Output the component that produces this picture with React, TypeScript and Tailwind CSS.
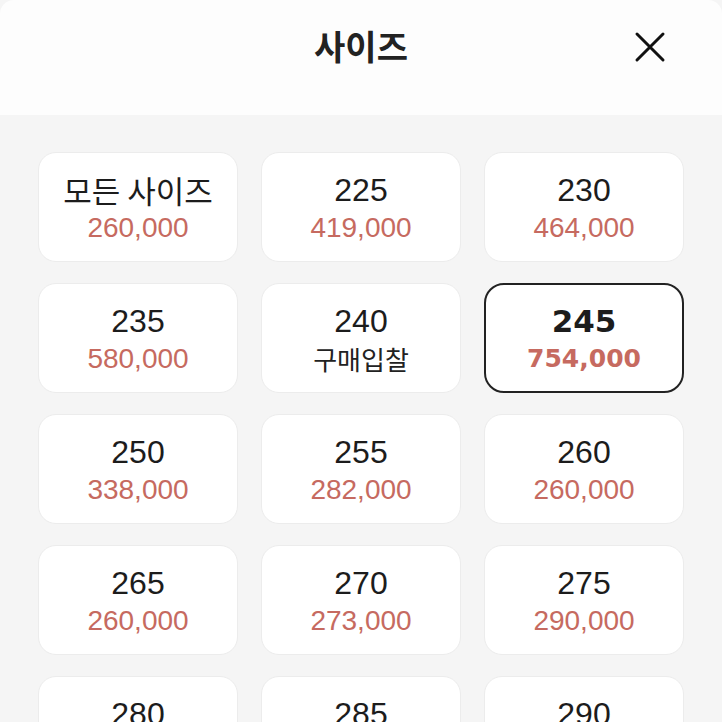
import React from 'react';

type SizeItem = {
  size: string;
  price: string;
  bid?: boolean;
  selected?: boolean;
};

const sizes: SizeItem[] = [
  { size: '모든 사이즈', price: '260,000' },
  { size: '225', price: '419,000' },
  { size: '230', price: '464,000' },
  { size: '235', price: '580,000' },
  { size: '240', price: '구매입찰', bid: true },
  { size: '245', price: '754,000', selected: true },
  { size: '250', price: '338,000' },
  { size: '255', price: '282,000' },
  { size: '260', price: '260,000' },
  { size: '265', price: '260,000' },
  { size: '270', price: '273,000' },
  { size: '275', price: '290,000' },
  { size: '280', price: '310,000' },
  { size: '285', price: '320,000' },
  { size: '290', price: '340,000' },
];

const kr = { fontFamily: '"Noto Sans CJK KR", sans-serif' };
const heavy = { fontFamily: '"DejaVu Sans", sans-serif' };

export default function App() {
  return (
    <div
      className="w-[722px] h-[722px] overflow-hidden bg-[#f5f5f5]"
      style={{ fontFamily: '"Liberation Sans", "Noto Sans CJK KR", sans-serif' }}
    >
      <div className="h-[115px] bg-[#fdfdfd] rounded-t-[14px] relative flex items-start justify-center">
        <h1 className="mt-[24px] text-[34px] leading-[44px] font-bold text-[#222]" style={kr}>
          사이즈
        </h1>
        <button className="absolute right-[56px] top-[31px] w-[32px] h-[32px] flex items-center justify-center">
          <svg width="32" height="32" viewBox="0 0 32 32" fill="none">
            <path d="M3 3L29 29M29 3L3 29" stroke="#111" strokeWidth="3" strokeLinecap="round" />
          </svg>
        </button>
      </div>

      <div className="px-[38px] pt-[37px] grid grid-cols-3 gap-x-[23px] gap-y-[21px]">
        {sizes.map((item) => (
          <div
            key={item.size}
            className={
              item.selected
                ? 'h-[110px] pt-[4px] rounded-[20px] bg-white border-2 border-[#222] flex flex-col items-center justify-center'
                : 'h-[110px] pt-[4px] rounded-[18px] bg-white border border-[#ececec] flex flex-col items-center justify-center'
            }
          >
            {item.size.length > 3 ? (
              <div className="text-[31px] leading-[38px] text-[#1c1c1c]" style={kr}>
                {item.size}
              </div>
            ) : item.selected ? (
              <div className="text-[31px] leading-[38px] font-bold text-[#1c1c1c]" style={heavy}>
                {item.size}
              </div>
            ) : (
              <div className="text-[32px] leading-[38px] text-[#1c1c1c]">{item.size}</div>
            )}
            {item.bid ? (
              <div className="text-[26px] leading-[38px] text-[#222]" style={kr}>
                {item.price}
              </div>
            ) : item.selected ? (
              <div className="text-[25px] leading-[38px] font-bold text-[#c66a60]" style={heavy}>
                {item.price}
              </div>
            ) : (
              <div className="text-[28px] leading-[38px] text-[#c66a60]">{item.price}</div>
            )}
          </div>
        ))}
      </div>
    </div>
  );
}
